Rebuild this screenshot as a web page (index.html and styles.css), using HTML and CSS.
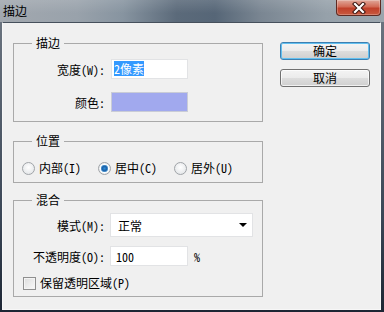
FILE: index.html
```html
<html>
<head>
  <meta charset="utf-8">
  <title>描边</title>
  <link rel="stylesheet" href="styles.css">
</head>
<body>
  <div class="window">
    <div class="titlebar">
      <span class="title">描边</span>
      <span class="close">
        <svg width="14" height="12" viewBox="0 0 14 12">
          <path d="M3 2 L11 10 M11 2 L3 10" stroke="#3a1510" stroke-width="4.2" stroke-linecap="square"/>
          <path d="M3 2 L11 10 M11 2 L3 10" stroke="#fff" stroke-width="2.2" stroke-linecap="square"/>
        </svg>
      </span>
    </div>

    <div class="client">
      <div class="groups">
        <fieldset class="group group-stroke">
          <legend>描边</legend>
          <div class="row">
            <label>宽度(W):</label>
            <span class="field field-width"><span class="selected">2像素</span></span>
          </div>
          <div class="row row-color">
            <label>颜色:</label>
            <span class="swatch"></span>
          </div>
        </fieldset>

        <fieldset class="group group-pos">
          <legend>位置</legend>
          <div class="radios">
            <span class="opt"><i class="radio"></i>内部(I)</span>
            <span class="opt"><i class="radio checked"></i>居中(C)</span>
            <span class="opt"><i class="radio"></i>居外(U)</span>
          </div>
        </fieldset>

        <fieldset class="group group-blend">
          <legend>混合</legend>
          <div class="row">
            <label>模式(M):</label>
            <span class="select">正常<i class="arrow"></i></span>
          </div>
          <div class="row row-opacity">
            <label>不透明度(O):</label>
            <span class="field field-opacity">100</span>
            <span class="unit">%</span>
          </div>
          <div class="check-row">
            <i class="checkbox"></i>保留透明区域(P)
          </div>
        </fieldset>
      </div>

      <div class="buttons">
        <button class="btn btn-default">确定</button>
        <button class="btn">取消</button>
      </div>
    </div>
  </div>
</body>
</html>
```

FILE: styles.css
```css
* {
  box-sizing: border-box;
}

body {
  margin: 0;
  font-family: "Noto Sans Mono CJK SC", "Noto Sans CJK SC", sans-serif;
  font-size: 12px;
  color: #000;
}

.window {
  width: 384px;
  height: 312px;
  display: flex;
  flex-direction: column;
  background: linear-gradient(to bottom, #6f7883, #3a4656 70%, #1d2634);
}

/* title bar */
.titlebar {
  height: 22px;
  display: flex;
  align-items: flex-start;
  justify-content: space-between;
  background:
    linear-gradient(to bottom, rgba(255,255,255,.12), rgba(255,255,255,0) 60%),
    linear-gradient(to right, #a2a8af 0%, #99a2ab 20%, #8794a0 32%, #5b6a7a 46%, #566677 56%, #7a8692 68%, #96a1aa 85%, #9ba5ad 100%);
}

.title {
  margin: 4px 0 0 3px;
  line-height: 14px;
}

.close {
  width: 45px;
  height: 16px;
  margin-right: 3px;
  display: flex;
  align-items: center;
  justify-content: center;
  border: 1px solid #5e2a22;
  border-top: 0;
  border-radius: 0 0 4px 4px;
  background: linear-gradient(to bottom, #e0a89a 0%, #d26a55 45%, #c0402a 55%, #c85a40 100%);
  box-shadow: inset 0 0 0 1px rgba(255,255,255,.25);
}

/* client area */
.client {
  flex: 1;
  margin: 0 3px 2px 2px;
  display: flex;
  background: #f0f0f0;
  border: 1px solid #f7f7f7;
  border-top-color: #46505c;
}

.groups {
  width: 260px;
  padding: 13px 0 0 10px;
}

.group {
  width: 250px;
  margin: 0;
  padding: 0;
  min-width: 0;
  border: 1px solid #a9a9a9;
  border-radius: 0;
}

.group legend {
  margin-left: 18px;
  padding: 0 4px;
  line-height: 14px;
}

.row {
  display: flex;
  align-items: center;
}

.row label {
  width: 91px;
  text-align: right;
}

.field, .swatch, .select {
  height: 20px;
  margin-left: 6px;
  background: #fff;
  border: 1px solid #e2e3e5;
}

/* stroke group */
.group-stroke {
  height: 86px;
  padding-top: 9px;
}

.field-width {
  width: 77px;
  padding: 1px 0 0 2px;
}

.selected {
  display: inline-block;
  height: 15px;
  line-height: 15px;
  background: #3399ff;
  color: #fff;
}

.row-color {
  margin-top: 13px;
}

.swatch {
  width: 77px;
  background: #a1a9ee;
  border-color: #c9ccd6;
}

/* position group */
.group-pos {
  height: 49px;
  margin-top: 12px;
  padding-top: 13px;
}

.radios {
  display: grid;
  grid-template-columns: 76px 76px 76px;
  padding-left: 8px;
}

.opt {
  display: flex;
  align-items: center;
  gap: 4px;
  line-height: 14px;
}

.radio {
  width: 13px;
  height: 13px;
  border-radius: 50%;
  border: 1px solid #a0a4a8;
  background: radial-gradient(circle at 50% 40%, #fff, #dde0e3);
}

.radio.checked {
  background: radial-gradient(circle, #2e8ed8 0, #1b5fa6 2.5px, #6fb0e0 3.5px, #fff 4px, #dfe2e5 6px);
}

/* blend group */
.group-blend {
  height: 104px;
  margin-top: 10px;
  padding-top: 6px;
}

.group-blend .field, .group-blend .select {
  margin-left: 5px;
}

.select {
  width: 143px;
  height: 24px;
  padding-left: 7px;
  display: flex;
  align-items: center;
  justify-content: space-between;
}

.arrow {
  width: 0;
  height: 0;
  margin-right: 5px;
  border-left: 4px solid transparent;
  border-right: 4px solid transparent;
  border-top: 4px solid #000;
}

.row-opacity {
  margin-top: 9px;
}

.field-opacity {
  width: 78px;
  padding: 2px 0 0 5px;
  line-height: 15px;
}

.unit {
  margin-left: 6px;
}

.check-row {
  margin: 10px 0 0 9px;
  display: flex;
  align-items: center;
  gap: 4px;
  line-height: 14px;
}

.checkbox {
  width: 13px;
  height: 13px;
  border: 1px solid #8f8f8f;
  background: linear-gradient(135deg, #dcdcdc, #fafafa);
  box-shadow: inset 0 0 0 1px #f4f4f4;
}

/* buttons */
.buttons {
  margin-left: 17px;
  padding-top: 19px;
  display: flex;
  flex-direction: column;
  gap: 9px;
}

.btn {
  width: 90px;
  height: 18px;
  padding: 0;
  font: inherit;
  line-height: 14px;
  border: 1px solid #707070;
  border-radius: 3px;
  background: linear-gradient(to bottom, #f4f4f4 0%, #ebebeb 49%, #dddddd 51%, #cfcfcf 100%);
  box-shadow: inset 0 0 0 1px rgba(255,255,255,.7);
}

.btn-default {
  border-color: #3c7fb1;
  box-shadow: inset 0 0 0 1px #62c0f0;
}
```
